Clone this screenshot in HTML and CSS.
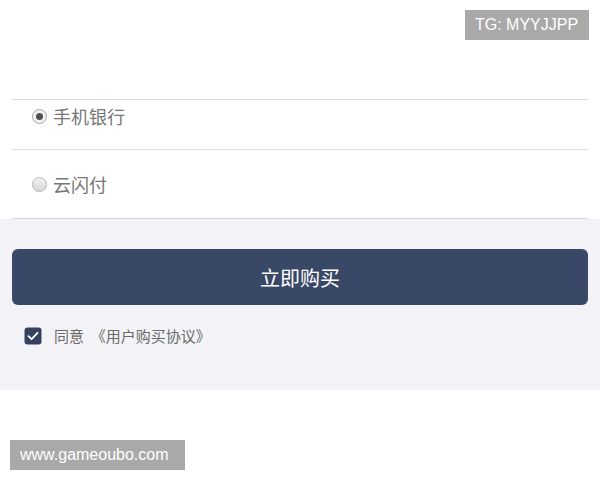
FILE: index.html
```html
<!DOCTYPE html>
<html lang="zh-CN">
  <head>
    <meta charset="UTF-8" />
    <meta name="viewport" content="width=device-width, initial-scale=1.0" />
    <title>立即购买</title>
    <link rel="stylesheet" href="styles.css">
  </head>
  <body>
    <div class="tag tag-top">TG: MYYJJPP</div>

    <div class="pay-list">
      <label class="pay-item pay-item-first">
        <span class="radio checked"></span>
        <span class="pay-name">手机银行</span>
      </label>
      <label class="pay-item">
        <span class="radio"></span>
        <span class="pay-name">云闪付</span>
      </label>
    </div>

    <div class="buy-box">
      <button class="buy-btn" type="button">立即购买</button>
      <div class="agree">
        <svg class="check" width="18" height="18" viewBox="0 0 18 18">
          <rect x="0.5" y="0.5" width="17" height="17" rx="3" fill="#35425f" />
          <path d="M4.5 9.2 L7.6 12.2 L13.5 5.8" fill="none" stroke="#fff" stroke-width="1.8" stroke-linecap="round" stroke-linejoin="round" />
        </svg>
        <span class="agree-text">同意 &nbsp;《用户购买协议》</span>
      </div>
    </div>

    <div class="tag tag-bottom">www.gameoubo.com</div>
  </body>
</html>
```

FILE: styles.css
```css
body {
  margin: 0;
  font-family: "Noto Sans CJK SC", "Liberation Sans", sans-serif;
  background-color: #fff;
  position: relative;
  height: 480px;
  overflow: hidden;
}
.tag {
  position: absolute;
  background-color: #a9a9a9;
  color: #fff;
  font-family: "Liberation Sans", Arial, sans-serif;
  font-size: 16px;
  height: 30px;
  line-height: 30px;
  padding: 0 10px;
}
.tag-top {
  top: 10px;
  left: 465px;
  width: 104px;
}
.tag-bottom {
  top: 440px;
  left: 10px;
  width: 155px;
}
.pay-list {
  margin: 99px 12px 0;
}
.pay-item {
  display: flex;
  align-items: center;
  border-top: 1px solid #dedede;
  height: 69px;
  padding-left: 20px;
  box-sizing: border-box;
}
.pay-item:last-child {
  border-bottom: 1px solid #d8d8d8;
  height: 70px;
}
.pay-item-first {
  height: 50px;
  align-items: flex-start;
  padding-top: 6px;
}
.pay-item-first .radio {
  margin-top: 3px;
}
.radio {
  width: 15px;
  height: 15px;
  border-radius: 50%;
  border: 1px solid #b4b4b4;
  background: linear-gradient(#f4f4f4, #d6d6d6);
  box-sizing: border-box;
  position: relative;
  margin-right: 6px;
  flex-shrink: 0;
}
.radio.checked {
  background: #f0f0f0;
  border-color: #a8a8a8;
}
.radio.checked::after {
  content: "";
  position: absolute;
  left: 3px;
  top: 3px;
  width: 7px;
  height: 7px;
  border-radius: 50%;
  background-color: #505050;
}
.pay-name {
  font-size: 18px;
  color: #777;
  line-height: 20px;
}
.buy-box {
  background-color: #f3f3f7;
  padding: 30px 12px 0;
  height: 171px;
  box-sizing: border-box;
}
.buy-btn {
  display: block;
  width: 100%;
  height: 56px;
  background-color: #3a4868;
  color: #fff;
  border: none;
  border-radius: 6px;
  font-family: inherit;
  font-size: 20px;
  cursor: pointer;
}
.agree {
  display: flex;
  align-items: center;
  margin-top: 20px;
  padding-left: 12px;
}
.check {
  margin-right: 12px;
}
.agree-text {
  font-size: 15px;
  color: #6a6a6a;
}
```
